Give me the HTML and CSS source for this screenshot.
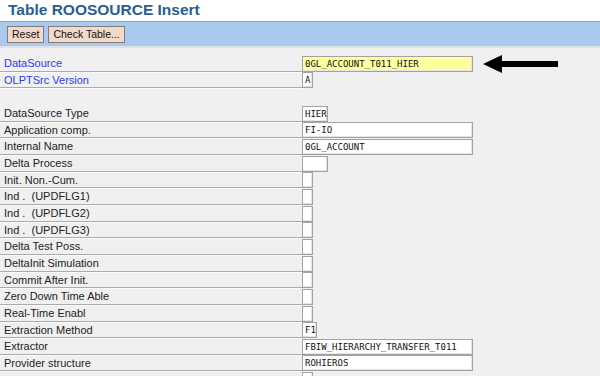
FILE: index.html
```html
<!DOCTYPE html>
<html lang="en">
<head>
  <meta charset="UTF-8">
  <title>Table ROOSOURCE Insert</title>
  <link rel="stylesheet" href="styles.css">
</head>
<body>
  <h1 class="title">Table ROOSOURCE Insert</h1>

  <div class="toolbar">
    <button class="btn">Reset</button>
    <button class="btn">Check Table...</button>
  </div>

  <div class="form">
    <div class="row">
      <div class="label key">DataSource</div>
      <div class="field wide yellow">0GL_ACCOUNT_T011_HIER</div>
      <svg class="arrow" width="76" height="20" viewBox="0 0 76 20">
        <polygon points="0,10 19,1 19,7 75,7 75,13 19,13 19,19" fill="#000"/>
      </svg>
    </div>
    <div class="row">
      <div class="label key">OLPTSrc Version</div>
      <div class="field w11">A</div>
    </div>
    <div class="row empty"></div>
    <div class="row">
      <div class="label">DataSource Type</div>
      <div class="field w26">HIER</div>
    </div>
    <div class="row">
      <div class="label">Application comp.</div>
      <div class="field wide">FI-IO</div>
    </div>
    <div class="row">
      <div class="label">Internal Name</div>
      <div class="field wide">0GL_ACCOUNT</div>
    </div>
    <div class="row">
      <div class="label">Delta Process</div>
      <div class="field w26"></div>
    </div>
    <div class="row">
      <div class="label">Init. Non.-Cum.</div>
      <div class="field check"></div>
    </div>
    <div class="row">
      <div class="label">Ind .  (UPDFLG1)</div>
      <div class="field check"></div>
    </div>
    <div class="row">
      <div class="label">Ind .  (UPDFLG2)</div>
      <div class="field check"></div>
    </div>
    <div class="row">
      <div class="label">Ind .  (UPDFLG3)</div>
      <div class="field check"></div>
    </div>
    <div class="row">
      <div class="label">Delta Test Poss.</div>
      <div class="field check"></div>
    </div>
    <div class="row">
      <div class="label">DeltaInit Simulation</div>
      <div class="field check"></div>
    </div>
    <div class="row">
      <div class="label">Commit After Init.</div>
      <div class="field check"></div>
    </div>
    <div class="row">
      <div class="label">Zero Down Time Able</div>
      <div class="field check"></div>
    </div>
    <div class="row">
      <div class="label">Real-Time Enabl</div>
      <div class="field check"></div>
    </div>
    <div class="row">
      <div class="label">Extraction Method</div>
      <div class="field w15">F1</div>
    </div>
    <div class="row">
      <div class="label">Extractor</div>
      <div class="field wide">FBIW_HIERARCHY_TRANSFER_T011</div>
    </div>
    <div class="row">
      <div class="label">Provider structure</div>
      <div class="field wide">ROHIEROS</div>
    </div>
    <div class="row">
      <div class="label"></div>
      <div class="field check"></div>
    </div>
  </div>
</body>
</html>
```

FILE: styles.css
```css
body {
  margin: 0;
  background: #f0f0f0;
  font-family: "Liberation Sans", Arial, sans-serif;
  color: #222;
  overflow: hidden;
}

.title {
  margin: 0;
  background: #fff;
  color: #2b5d91;
  font-size: 15.5px;
  font-weight: bold;
  height: 21px;
  line-height: 19px;
  padding-left: 8px;
}

.toolbar {
  background: #a9c9ee;
  border-top: 1px solid #86a6c8;
  height: 24px;
  display: flex;
  align-items: center;
  gap: 4px;
  padding-left: 7px;
  border-bottom: 2px solid #e2e2e2;
}

.btn {
  background: #f2d9c9;
  border: 1px solid #7c7c7c;
  font-family: "Liberation Sans", Arial, sans-serif;
  font-size: 10.5px;
  color: #111;
  height: 17px;
  padding: 0 4px;
  margin: 0;
}

.form {
  padding-top: 7px;
}

.row {
  display: flex;
  align-items: flex-end;
  height: 16.67px;
}

.label {
  width: 302px;
  height: 100%;
  box-sizing: border-box;
  border-bottom: 1px solid #ababab;
  box-shadow: 0 1px 0 #fbfbfb;
  font-size: 11px;
  line-height: 16px;
  padding-left: 4px;
  white-space: pre;
}

.label.key {
  color: #2c3cf0;
}

.row.empty {
  border: none;
}

.field {
  height: 16px;
  box-sizing: border-box;
  background: #fff;
  border: 1px solid #a2a2a2;
  box-shadow: inset -1px -1px 0 #e4e4e4;
  font-family: "DejaVu Sans Mono", monospace;
  font-size: 9px;
  line-height: 14px;
  padding-left: 2px;
  color: #111;
  white-space: pre;
}

.field.wide {
  width: 171px;
}

.field.yellow {
  background: #ffff9e;
}

.field.w11 {
  width: 11px;
}

.field.w15 {
  width: 15px;
}

.field.w26 {
  width: 26px;
}

.field.check {
  width: 11px;
}

.arrow {
  align-self: center;
  margin-left: 10px;
  margin-top: 2px;
}
```
